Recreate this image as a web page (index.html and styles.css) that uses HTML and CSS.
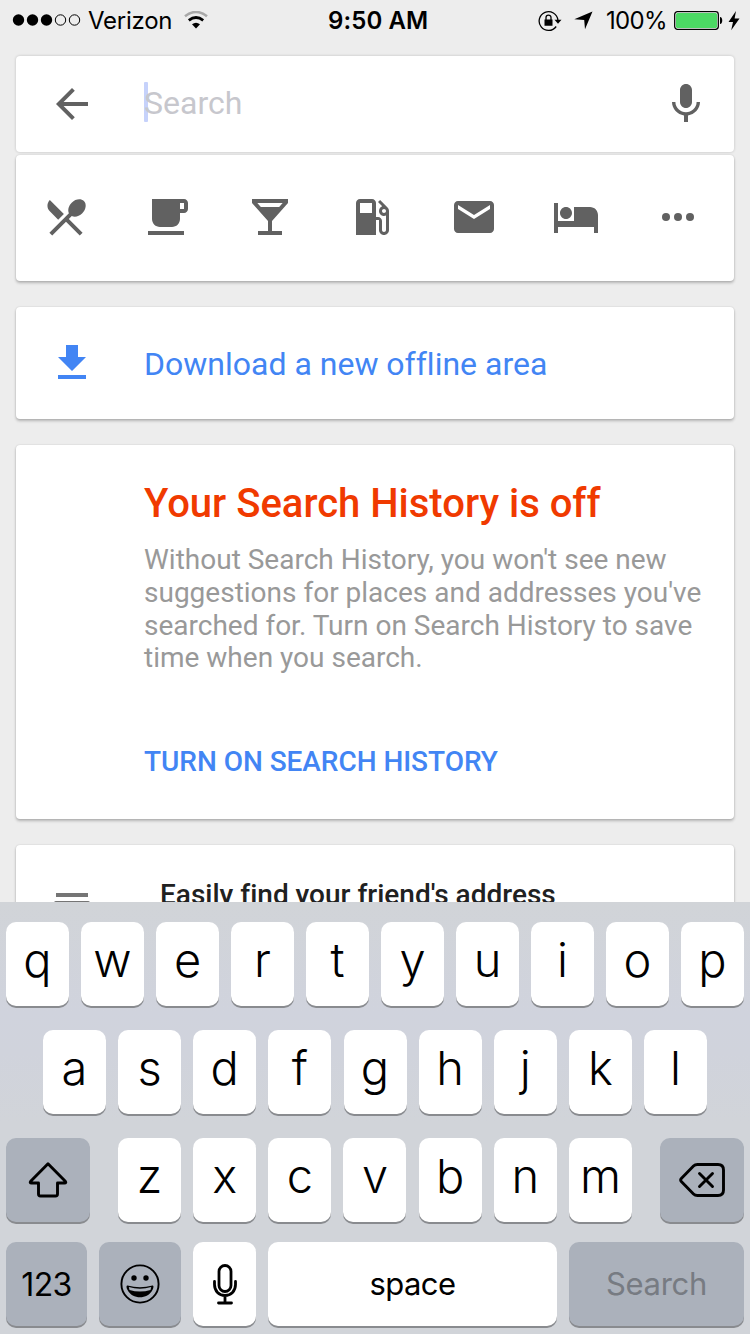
FILE: index.html
```html
<!DOCTYPE html>
<html lang="en">
<head>
<meta charset="utf-8">
<title>Search</title>
<link rel="stylesheet" href="styles.css">
</head>
<body>
<div class="screen">
  <header class="status">
    <div class="status-left">
      <svg class="signal" width="70" height="14" viewBox="0 0 70 14"><g><circle cx="6.5" cy="7" r="5.7"/><circle cx="20.5" cy="7" r="5.7"/><circle cx="34.5" cy="7" r="5.7"/></g><g fill="none" stroke="#000" stroke-width="1"><circle cx="48.5" cy="7" r="5.2"/><circle cx="62.5" cy="7" r="5.2"/></g></svg>
      <span class="carrier">Verizon</span>
      <svg class="wifi" width="24" height="18" viewBox="0 0 24 18"><path d="M1 5.2Q12-3.2 23 5.2" fill="none" stroke="#a8a8a8" stroke-width="2.6"/><path d="M4.8 9.3Q12 3.7 19.2 9.3" fill="none" stroke="#000" stroke-width="2.8"/><path d="M8 13.3Q12 10.3 16 13.3L12 17.5Z"/></svg>
    </div>
    <span class="clock">9:50 AM</span>
    <div class="status-right">
      <svg class="lock" width="24" height="22" viewBox="0 0 24 22"><path d="M18.2 16.5A9.4 9.4 0 1 1 19.9 10" fill="none" stroke="#000" stroke-width="1.3"/><path d="M16.5 9.800h7L20 13.800zM6.500 9.500h8v6.300h-8z"/><path d="M8 10V7.600a2.500 2.500 0 0 1 5 0V10" fill="none" stroke="#000" stroke-width="1.300"/></svg>
      <svg class="locate" width="19" height="19" viewBox="0 0 19 19"><path d="M18.5.5L11 18.3 10.2 9 .3 8.2Z"/></svg>
      <span class="percent">100%</span>
      <svg class="battery" width="49" height="20" viewBox="0 0 49 20"><rect x=".7" y=".7" width="43.6" height="17.6" rx="2.8" fill="#fff" stroke="#000" stroke-width="1.3"/><rect x="2" y="2" width="41" height="15" rx="1.5" fill="#4cd964"/><path d="M46 6c3 0 3 7 0 7z"/></svg>
      <svg class="bolt" width="12" height="20" viewBox="0 0 12 20"><path d="M8 0L.5 11H5L3.2 19.3 11.5 7.6H6.6Z"/></svg>
    </div>
  </header>

  <main class="content">
    <section class="card search-card">
      <svg class="icon" viewBox="0 0 24 24"><path d="M20 11H7.8l5.6-5.6L12 4l-8 8 8 8 1.4-1.4L7.8 13H20z"/></svg>
      <div class="field"><span class="caret"></span><span class="hint">Search</span></div>
      <svg class="icon" viewBox="0 0 24 24"><path d="M12 14c1.66 0 3-1.34 3-3V5c0-1.66-1.34-3-3-3S9 3.34 9 5v6c0 1.66 1.34 3 3 3zm5.3-3c0 3-2.54 5.1-5.3 5.1S6.7 14 6.7 11H5c0 3.41 2.72 6.23 6 6.72V21h2v-3.28c3.28-.48 6-3.3 6-6.72z"/></svg>
    </section>
    <section class="card categories">
      <svg class="icon" viewBox="0 0 24 24"><path d="M8.1 13.34l2.83-2.83L3.91 3.5c-1.56 1.56-1.56 4.09 0 5.66l4.19 4.18zm6.78-1.81c1.53.71 3.68.21 5.27-1.38 1.91-1.91 2.28-4.65.81-6.12-1.46-1.46-4.2-1.1-6.12.81-1.59 1.59-2.09 3.74-1.38 5.27L3.7 19.87l1.41 1.41L12 14.41l6.88 6.88 1.41-1.41L13.41 13z"/></svg>
      <svg class="icon" viewBox="0 0 24 24"><path d="M20 3H4v10c0 2.21 1.79 4 4 4h6c2.21 0 4-1.79 4-4v-3h2c1.11 0 2-.9 2-2V5c0-1.11-.89-2-2-2zm0 5h-2V5h2zM2 21h18v-2H2z"/></svg>
      <svg class="icon" viewBox="0 0 24 24"><path d="M21 5V3H3v2l8 9v5H6v2h12v-2h-5v-5zM7.43 7L5.66 5h12.69l-1.78 2z"/></svg>
      <svg class="icon" viewBox="0 0 24 24"><path d="M19.77 7.23l.01-.01-3.72-3.72L15 4.56l2.11 2.11c-.94.36-1.61 1.26-1.61 2.33 0 1.38 1.12 2.5 2.5 2.5.36 0 .69-.08 1-.21v7.21c0 .55-.45 1-1 1s-1-.45-1-1V14c0-1.1-.9-2-2-2h-1V5c0-1.1-.9-2-2-2H6c-1.1 0-2 .9-2 2v16h10v-7.5h1.5v5c0 1.38 1.12 2.5 2.5 2.5s2.5-1.12 2.5-2.5V9c0-.69-.28-1.32-.73-1.77zM12 10H6V5h6v5zm6 0c-.55 0-1-.45-1-1s.45-1 1-1 1 .45 1 1-.45 1-1 1z"/></svg>
      <svg class="icon" viewBox="0 0 24 24"><path d="M20 4H4c-1.1 0-1.99.9-1.99 2L2 18c0 1.1.9 2 2 2h16c1.1 0 2-.9 2-2V6c0-1.1-.9-2-2-2zm0 4l-8 5-8-5V6l8 5 8-5z"/></svg>
      <svg class="icon" viewBox="0 0 24 24"><path d="M7 13c1.66 0 3-1.34 3-3S8.66 7 7 7s-3 1.34-3 3 1.34 3 3 3zm12-6h-8v7H3V5H1v15h2v-3h18v3h2v-9c0-2.21-1.79-4-4-4z"/></svg>
      <svg class="icon" viewBox="0 0 24 24"><circle cx="6" cy="12" r="2"/><circle cx="12" cy="12" r="2"/><circle cx="18" cy="12" r="2"/></svg>
    </section>

    <section class="card download">
      <svg class="icon" viewBox="0 0 24 24"><path d="M19 9h-4V3H9v6H5l7 7zM5 18v2h14v-2z"/></svg>
      <span>Download a new offline area</span>
    </section>

    <section class="card history">
      <h1>Your Search History is off</h1>
      <p>Without Search History, you won't see new<br>suggestions for places and addresses you've<br>searched for. Turn on Search History to save<br>time when you search.</p>
      <a class="action">TURN ON SEARCH HISTORY</a>
    </section>

    <section class="card friends">
      <svg width="36" height="40" viewBox="0 0 36 40"><path d="M2 0h32v4H2zM2 8h32a2 2 0 0 1 2 2v24H0V10a2 2 0 0 1 2-2z"/></svg>
      <span>Easily find your friend's address</span>
    </section>
  </main>

  <div class="keyboard">
    <div class="row"><b class="key">q</b><b class="key">w</b><b class="key">e</b><b class="key">r</b><b class="key">t</b><b class="key">y</b><b class="key">u</b><b class="key">i</b><b class="key">o</b><b class="key">p</b></div>
    <div class="row row-home"><b class="key">a</b><b class="key">s</b><b class="key">d</b><b class="key">f</b><b class="key">g</b><b class="key">h</b><b class="key">j</b><b class="key">k</b><b class="key">l</b></div>
    <div class="row">
      <b class="key dark wide"><svg width="40" height="36" viewBox="0 0 40 36"><path d="M20 1.8L37.3 19.3Q38.5 21 36.5 21H29.5V32Q29.5 34 27.5 34H12.5Q10.5 34 10.5 32V21H3.5Q1.5 21 2.7 19.3Z" fill="none" stroke="#000" stroke-width="2.9" stroke-linejoin="round"/></svg></b>
      <div class="letters"><b class="key">z</b><b class="key">x</b><b class="key">c</b><b class="key">v</b><b class="key">b</b><b class="key">n</b><b class="key">m</b></div>
      <b class="key dark wide"><svg width="48" height="36" viewBox="0 0 48 36"><path d="M19.500 2.500H40Q45.500 2.500 45.500 8V28Q45.500 33.500 40 33.500H19.500Q17 33.500 15.500 32L3.300 19.500Q2 18 3.300 16.500L15.500 4Q17 2.500 19.500 2.500ZM21.500 11.500L34.500 24.500M34.500 11.500L21.500 24.500" fill="none" stroke="#000" stroke-width="2.900" stroke-linecap="round" stroke-linejoin="round"/></svg></b>
    </div>
    <div class="row">
      <b class="key dark label num">123</b>
      <b class="key dark emoji"><svg width="40" height="40" viewBox="0 0 40 40"><circle cx="20" cy="20" r="18.6" fill="none" stroke="#000" stroke-width="1.9"/><circle cx="14" cy="14" r="2.7"/><circle cx="26" cy="14" r="2.7"/><path d="M7.5 21.5Q20 25 32.5 21.5C34 21.5 33.5 24 32.7 25.5C30 31 25 33.3 20 33.3S10 31 7.3 25.5C6.5 24 6 21.500 7.500 21.500Z"/><path d="M8.800 23Q20 26.500 31.200 23L30.500 26Q20 29 9.500 26Z" fill="#abb1bb"/></svg></b>
      <b class="key"><svg width="26" height="42" viewBox="0 0 26 42"><g fill="none" stroke="#000" stroke-width="2.8" stroke-linecap="round"><rect x="7" y="2.5" width="12" height="26" rx="6"/><path d="M2.5 18.5V21.5C2.5 28 7 32.5 13 32.5S23.500 28 23.500 21.500V18.500M13 33V40M6.500 40H19.500"/></g></svg></b>
      <b class="key label space">space</b>
      <b class="key dark label go">Search</b>
    </div>
  </div>
</div>
</body>
</html>
```
FILE: styles.css
```css
* { box-sizing: border-box; }
body { margin: 0; background: #ededed; }
svg { display: block; flex: none; }
.screen {
  width: 750px;
  height: 1334px;
  display: flex;
  flex-direction: column;
  overflow: hidden;
  font-family: Roboto, sans-serif;
  font-variant-ligatures: none;
}
.status {
  height: 40px;
  flex: none;
  display: grid;
  grid-template-columns: 328px 1fr 210px;
  align-items: center;
  font-family: Inter, sans-serif;
  font-size: 24px;
  line-height: 38px;
  white-space: nowrap;
}
.status-left, .status-right { display: flex; align-items: center; }
.status-left { padding-left: 12px; }
.status span { padding-top: 2px; }
.carrier { margin-left: 6px; letter-spacing: -0.25px; }
.wifi { margin-left: 12px; }
.clock { font-weight: 600; letter-spacing: 0.1px; }
.status-right { justify-content: flex-end; padding-right: 10px; }
.lock { margin-top: 1px; }
.locate { margin-left: 12px; margin-top: 1px; }
.percent { margin-left: 13px; letter-spacing: -0.65px; }
.battery { margin-left: 7px; margin-top: 2px; }
.bolt { margin-left: 5px; margin-top: 1px; }

.content {
  height: 862px;
  flex: none;
  padding: 16px 16px 0;
  overflow: hidden;
  display: flex;
  flex-direction: column;
}
.card {
  flex: none;
  background: #fff;
  border-radius: 4px;
  box-shadow: 0 2px 3px rgba(0, 0, 0, 0.24), 0 0 2px rgba(0, 0, 0, 0.14);
}
.icon { width: 48px; height: 48px; fill: #616161; }
.search-card {
  height: 96px;
  display: flex;
  align-items: center;
  padding: 0 24px 0 32px;
  box-shadow: 0 0 3px rgba(0, 0, 0, 0.2);
}
.field {
  flex: 1;
  position: relative;
  margin-left: 48px;
  margin-top: -2px;
  font-size: 32px;
  line-height: 40px;
  color: #c7c7cd;
}
.hint { position: relative; }
.caret {
  position: absolute;
  left: 0;
  top: -1px;
  width: 4px;
  height: 40px;
  border-radius: 1px;
  background: #c6d2fb;
}
.categories {
  height: 126px;
  margin-top: 3px;
  padding: 0 32px 2px 26px;
  display: flex;
  align-items: center;
  justify-content: space-between;
}
.download {
  height: 112px;
  margin-top: 26px;
  padding-left: 32px;
  display: flex;
  align-items: center;
  gap: 48px;
  font-size: 32px;
  color: #4285f4;
}
.download span { padding-top: 2px; }
.download .icon { fill: #4285f4; }
.history {
  height: 374px;
  margin-top: 26px;
  padding: 35px 0 0 128px;
  white-space: nowrap;
}
.history h1 {
  margin: 0;
  font-size: 40px;
  font-weight: 500;
  line-height: 48px;
  color: #f03a00;
}
.history p {
  margin: 16px 0 0;
  font-size: 28px;
  line-height: 32.8px;
  color: #999;
}
.action {
  display: block;
  margin-top: 70px;
  font-size: 28px;
  font-weight: 500;
  line-height: 34px;
  letter-spacing: -0.04px;
  color: #4285f4;
}
.friends {
  height: 120px;
  margin-top: 26px;
  padding: 32px 0 0 38px;
  display: flex;
  gap: 70px;
  font-size: 28px;
  font-weight: 500;
  line-height: 36px;
  color: #212121;
}
.friends svg { margin-top: 16px; fill: #757575; }

.keyboard {
  height: 432px;
  flex: none;
  padding: 20px 6px 0;
  background: linear-gradient(#d1d4d8, #d0d3dd 110px, #d0d3dc 150px, #d1d4d9 220px);
  font-family: Inter, sans-serif;
}
.row { height: 84px; display: flex; justify-content: space-between; margin-bottom: 24px; }
.row-home { padding: 0 37px; }
.row:nth-child(3) { margin-bottom: 20px; }
.letters { width: 514px; display: flex; justify-content: space-between; }
.key {
  width: 63px;
  height: 84px;
  display: flex;
  align-items: center;
  justify-content: center;
  padding-bottom: 9px;
  border-radius: 10px;
  background: #fff;
  box-shadow: 0 2px 0 #898b8f;
  font-size: 47px;
  font-weight: 350;
  line-height: 60px;
}
.key svg { margin-top: 9px; }
.dark { background: #abb1bb; }
.wide { width: 84px; }
.num { width: 81px; }
.emoji { width: 82px; padding-right: 1px; }
.label { font-size: 31px; font-weight: 400; padding-bottom: 0; }
.label.num { font-size: 32px; letter-spacing: -0.6px; padding-top: 2px; }
.space { width: 289px; letter-spacing: -0.6px; }
.go { width: 175px; color: #777b82; letter-spacing: -0.3px; }
```
